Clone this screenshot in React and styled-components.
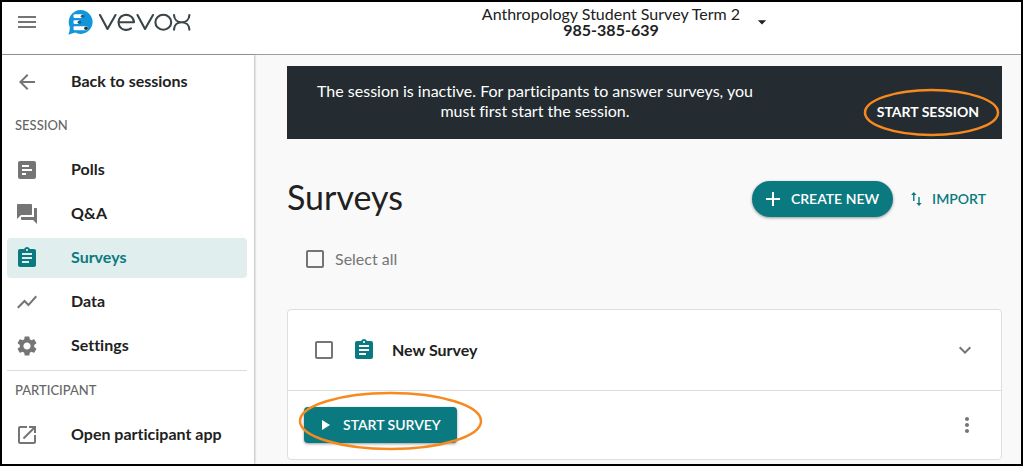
import styled, { createGlobalStyle } from "styled-components";
import {
  MdAdd,
  MdArrowBack,
  MdArrowDropDown,
  MdAssignment,
  MdExpandMore,
  MdForum,
  MdMenu,
  MdMoreVert,
  MdOpenInNew,
  MdSettings,
  MdShowChart,
} from "react-icons/md";

const GlobalStyle = createGlobalStyle`
  * {
    box-sizing: border-box;
  }
  body {
    margin: 0;
    background: #fff;
    color: #212121;
    font-family: Lato, "Liberation Sans", sans-serif;
    font-size: 16px;
    font-variant-ligatures: none;
    line-height: 20px;
  }
  button {
    font: inherit;
    font-variant-ligatures: none;
    color: inherit;
    padding: 0;
    border: 0;
    background: none;
    cursor: pointer;
  }
`;

const Frame = styled.div`
  display: flex;
  flex-direction: column;
  min-height: calc(100vh - 1px);
  margin-right: 2px;
  border: 2px solid #000;
  background: #f9f9f9;
`;

const Header = styled.header`
  display: grid;
  grid-template-columns: 240px 1fr;
  align-items: center;
  height: 53px;
  padding: 0 22px 12px 13px;
  background: #fff;
  border-bottom: 1px solid #9e9e9e;
`;

const Brand = styled.div`
  display: flex;
  align-items: center;
  gap: 29px;
`;

const IconButton = styled.button`
  display: flex;
  color: #757575;
`;

const SessionPicker = styled.button`
  display: flex;
  align-items: center;
  justify-self: center;
  gap: 12px;
  line-height: 16px;
  text-align: center;

  strong {
    display: block;
  }
`;

const Body = styled.div`
  display: flex;
  flex: 1;
`;

const Sidebar = styled.nav`
  flex: 0 0 252px;
  padding: 7px 7px 0 5px;
  background: #fff;
  box-shadow: 1px 0 2px rgba(0, 0, 0, 0.25);
`;

const NavLink = styled.a`
  display: flex;
  align-items: center;
  gap: 32px;
  height: 40px;
  margin-bottom: 4px;
  padding-left: 8px;
  border-radius: 4px;
  background: ${(p) => (p.$active ? "#e0eeee" : "transparent")};
  color: ${(p) => (p.$active ? "#0b7a80" : "#212121")};
  font-weight: 700;
  text-decoration: none;

  svg {
    color: ${(p) => (p.$active ? "#0b7a80" : "#757575")};
  }

  span {
    padding-bottom: 2px;
  }
`;

const GroupLabel = styled.h2`
  margin: 0;
  padding: 9px 8px 15px;
  color: #666;
  font-size: 13px;
  font-weight: 500;
  line-height: 20px;
`;

const Divider = styled.hr`
  margin: 0;
  border: 0;
  border-top: 1px solid #dcdcdc;
`;

const Main = styled.main`
  flex: 1;
  padding: 11px 19px 4px 33px;
`;

const Banner = styled.section`
  display: flex;
  align-items: center;
  justify-content: space-between;
  min-height: 73px;
  padding: 0 23px 0 16px;
  background: #242c31;
  color: #fff;

  p {
    width: 464px;
    margin: 0;
    padding-bottom: 4px;
    text-align: center;
  }
`;

const BannerAction = styled.button`
  position: relative;
  padding-top: 18px;
  font-size: 14px;
  font-weight: 700;
`;

const TitleRow = styled.div`
  display: flex;
  align-items: center;
  margin-top: 40px;

  h1 {
    flex: 1;
    margin: 0;
    padding-bottom: 4px;
    font-size: 34px;
    font-weight: 400;
    line-height: 36px;
  }
`;

const PillButton = styled.button`
  display: flex;
  align-items: center;
  gap: 6px;
  height: 36px;
  padding: 0 14px 0 9px;
  border-radius: 18px;
  background: #0b7a80;
  box-shadow: 0 1px 3px rgba(0, 0, 0, 0.4);
  color: #fff;
  font-size: 14px;
  font-weight: 600;
`;

const TextButton = styled.button`
  display: flex;
  align-items: center;
  gap: 10px;
  height: 36px;
  padding: 0 16px 0 18px;
  color: #0b7a80;
  font-size: 14px;
  font-weight: 600;
`;

const Checkbox = styled.input`
  appearance: none;
  flex: none;
  width: 18px;
  height: 18px;
  margin: 0;
  border: 2px solid #757575;
  border-radius: 2px;
`;

const SelectAll = styled.label`
  display: flex;
  align-items: center;
  gap: 11px;
  margin: 30px 0 0 19px;
  color: #757575;
`;

const Card = styled.article`
  margin-top: 40px;
  border: 1px solid #dedede;
  border-radius: 4px;
  background: #fff;
`;

const CardHeader = styled.div`
  display: flex;
  align-items: center;
  height: 81px;
  padding: 0 24px 0 27px;
  border-bottom: 1px solid #dedede;
  color: #0b7a80;

  label {
    display: flex;
    flex: 1;
    align-items: center;
    gap: 16px;
    padding-left: 19px;
    font-weight: 700;
  }

  span {
    color: #212121;
  }
`;

const CardFooter = styled.div`
  display: flex;
  align-items: center;
  justify-content: space-between;
  height: 68px;
  padding: 0 22px 0 16px;
`;

const StartButton = styled(PillButton)`
  position: relative;
  gap: 9px;
  padding: 0 16px 0 12px;
  border-radius: 4px;
`;

const Ring = styled.svg`
  position: absolute;
  top: ${(p) => p.$top}px;
  left: ${(p) => p.$left}px;
  overflow: visible;
  pointer-events: none;
`;

const Highlight = ({ width, height, top, left }) => (
  <Ring width={width} height={height} $top={top} $left={left} aria-hidden="true">
    <ellipse
      cx={width / 2}
      cy={height / 2}
      rx={width / 2 - 1}
      ry={height / 2 - 1}
      fill="none"
      stroke="#f7891f"
      strokeWidth="2.5"
    />
  </Ring>
);

const Logo = () => (
  <svg width="124" height="26" viewBox="0 0 124 26" role="img" aria-label="Vevox">
    <path
      d="M12.700 1.100a11.900 11.900 0 1 1-5.400 22.500Q4 24.400 .4 25.800Q1.900 22.500 1.800 18A11.900 11.900 0 0 1 12.700 1.100z"
      fill="#1296db"
    />
    <g fill="#fff">
      <rect x="5.500" y="5.200" width="10" height="3.800" rx="1.200" />
      <rect x="5.500" y="11.200" width="6.500" height="3.800" rx="1.200" />
      <rect x="5.500" y="17.300" width="14" height="3.900" rx="1.200" />
    </g>
    <circle cx="14.600" cy="7.200" r="1.800" fill="#1b5e86" />
    <circle cx="11.400" cy="13.200" r="1.800" fill="#1b5e86" />
    <circle cx="18" cy="19.300" r="1.800" fill="#26333a" />
    <g
      fill="none"
      stroke="#3a4549"
      strokeWidth="2.100"
      strokeLinecap="round"
      strokeLinejoin="round"
    >
      <path d="M32 6l7.500 14L47.500 6" />
      <path d="M50.500 13.300H66A7.800 7.500 0 1 0 63 19.300" />
      <path d="M69.500 6L77 20L85 6" />
      <ellipse cx="95.300" cy="13.300" rx="7.900" ry="7.500" />
      <path d="M106 6c.2 4.500 3.200 7.300 7.700 7.300s7.500-2.800 7.700-7.300M106 20.600c.2-4.500 3.200-7.300 7.700-7.300s7.500 2.800 7.700 7.300" />
    </g>
  </svg>
);

const PollIcon = () => (
  <svg width="24" height="24" viewBox="0 0 24 24" aria-hidden="true">
    <path
      fill="currentColor"
      fillRule="evenodd"
      d="M5 3h14a2 2 0 0 1 2 2v14a2 2 0 0 1-2 2H5a2 2 0 0 1-2-2V5a2 2 0 0 1 2-2zM7 7v2h7V7zM7 11v2h10v-2zM7 15v2h4v-2z"
    />
  </svg>
);

const SwapIcon = () => (
  <svg width="11" height="16" viewBox="0 0 11 16" aria-hidden="true">
    <path
      fill="currentColor"
      d="M2.800 1l2.700 3H3.500v6H2.100V4H.1zM8 15l-2.700-3h2V6h1.400v6h2z"
    />
  </svg>
);

const PlayIcon = () => (
  <svg width="18" height="18" viewBox="0 0 18 18" aria-hidden="true">
    <path fill="currentColor" d="M6 4l8 5-8 5z" />
  </svg>
);

const sessionLinks = [
  { label: "Polls", Icon: PollIcon },
  { label: "Q&A", Icon: MdForum },
  { label: "Surveys", Icon: MdAssignment, active: true },
  { label: "Data", Icon: MdShowChart },
  { label: "Settings", Icon: MdSettings },
];

const App = () => {
  return (
    <Frame>
      <GlobalStyle />
      <Header>
        <Brand>
          <IconButton aria-label="Menu">
            <MdMenu size={24} />
          </IconButton>
          <Logo />
        </Brand>
        <SessionPicker>
          <span>
            Anthropology Student Survey Term 2<strong>985-385-639</strong>
          </span>
          <MdArrowDropDown size={20} />
        </SessionPicker>
      </Header>
      <Body>
        <Sidebar>
          <NavLink href="#sessions">
            <MdArrowBack size={24} />
            <span>Back to sessions</span>
          </NavLink>
          <GroupLabel>SESSION</GroupLabel>
          {sessionLinks.map(({ label, Icon, active }) => (
            <NavLink key={label} href={"#" + label.toLowerCase()} $active={active}>
              <Icon size={24} />
              <span>{label}</span>
            </NavLink>
          ))}
          <Divider />
          <GroupLabel>PARTICIPANT</GroupLabel>
          <NavLink href="#participant">
            <MdOpenInNew size={24} />
            <span>Open participant app</span>
          </NavLink>
        </Sidebar>
        <Main>
          <Banner>
            <p>
              The session is inactive. For participants to answer surveys, you must
              first start the session.
            </p>
            <BannerAction>
              START SESSION
              <Highlight width={135} height={47} top={5} left={-13} />
            </BannerAction>
          </Banner>
          <TitleRow>
            <h1>Surveys</h1>
            <PillButton>
              <MdAdd size={24} />
              CREATE NEW
            </PillButton>
            <TextButton>
              <SwapIcon />
              IMPORT
            </TextButton>
          </TitleRow>
          <SelectAll>
            <Checkbox type="checkbox" />
            Select all
          </SelectAll>
          <Card>
            <CardHeader>
              <Checkbox type="checkbox" id="survey" />
              <label htmlFor="survey">
                <MdAssignment size={24} />
                <span>New Survey</span>
              </label>
              <IconButton aria-label="Expand">
                <MdExpandMore size={24} />
              </IconButton>
            </CardHeader>
            <CardFooter>
              <StartButton>
                <PlayIcon />
                START SURVEY
                <Highlight width={183} height={58} top={-15} left={-5} />
              </StartButton>
              <IconButton aria-label="More">
                <MdMoreVert size={24} />
              </IconButton>
            </CardFooter>
          </Card>
        </Main>
      </Body>
    </Frame>
  );
};

export default App;
